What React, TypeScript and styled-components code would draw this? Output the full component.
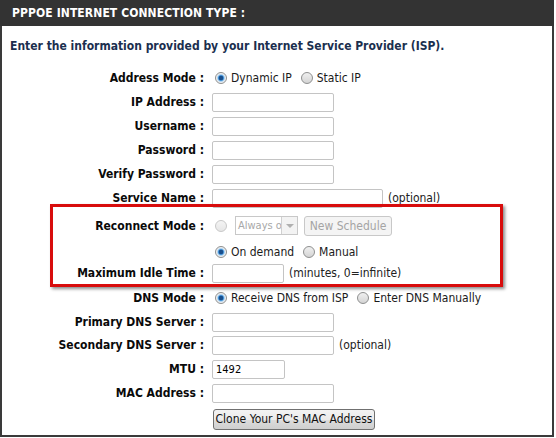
import React from "react";
import styled, { createGlobalStyle } from "styled-components";

const Global = createGlobalStyle`
  html, body { margin: 0; padding: 0; background: #fff; }
  body { font-family: "DejaVu Sans Condensed", "DejaVu Sans", sans-serif; }
`;

const Frame = styled.div`
  position: relative;
  box-sizing: border-box;
  width: 554px;
  height: 437px;
  border: 2px solid #3a3a3a;
  border-top: none;
  background: #fff;
`;

const Header = styled.div`
  height: 26px;
  margin: 0 -2px;
  background: #333333;
  color: #fff;
  font-weight: bold;
  font-size: 12px;
  display: flex;
  align-items: center;
  padding-left: 12px;
  letter-spacing: 0.1px;
`;

const Intro = styled.div`
  height: 40px;
  display: flex;
  align-items: center;
  padding-left: 8px;
  color: #1b2f4f;
  font-weight: bold;
  font-size: 12px;
`;

const Row = styled.div<{ $h: number }>`
  display: grid;
  grid-template-columns: 202px 1fr;
  column-gap: 8px;
  height: ${(p) => p.$h}px;
  align-items: center;
  font-size: 12px;
  color: #000;
`;

const Label = styled.div`
  text-align: right;
  font-weight: bold;
  white-space: nowrap;
  color: #0a0a0a;
`;

const Field = styled.div`
  display: flex;
  align-items: center;
  gap: 4px;
  white-space: nowrap;
  color: #1a1a1a;
`;

const TextBox = styled.div<{ $w: number }>`
  box-sizing: border-box;
  width: ${(p) => p.$w}px;
  height: 19px;
  border: 1px solid #c4c4c4;
  border-radius: 2px;
  background: #fff;
  font-size: 11px;
  display: flex;
  align-items: center;
  padding-left: 3px;
  color: #000;
`;

const RadioDot = styled.span<{ $on?: boolean; $dim?: boolean }>`
  box-sizing: border-box;
  display: inline-block;
  flex: none;
  width: 12px;
  height: 12px;
  border-radius: 50%;
  border: 1px solid ${(p) => (p.$dim ? "#c8c8c8" : "#8e8f8f")};
  background: ${(p) =>
    p.$on
      ? "radial-gradient(circle, #1a4f8c 0 2px, #3d8fd6 2.5px, #bcd9f0 3.6px, #f2f2f2 4.6px)"
      : p.$dim
      ? "linear-gradient(#f4f4f4, #e6e6e6)"
      : "linear-gradient(#f0f0f0, #d4d4d4)"};
  margin: 0 4px 0 3px;
`;

const Choice = styled.span`
  display: inline-flex;
  align-items: center;
  margin-right: 2px;
`;

const Select = styled.div`
  box-sizing: border-box;
  display: flex;
  width: 63px;
  height: 19px;
  border: 1px solid #c8c8c8;
  color: #a8a8a8;
  font-size: 11px;
  align-items: center;
  padding-left: 2px;
  overflow: hidden;
`;

const SelText = styled.span`
  flex: 1;
  min-width: 0;
`;

const Arrow = styled.span`
  box-sizing: border-box;
  flex: none;
  width: 16px;
  height: 17px;
  border-left: 1px solid #d0d0d0;
  background: #f3f3f3;
  display: flex;
  align-items: center;
  justify-content: center;
  &::after {
    content: "";
    border-left: 4px solid transparent;
    border-right: 4px solid transparent;
    border-top: 4px solid #b0b0b0;
  }
`;

const GhostButton = styled.div`
  box-sizing: border-box;
  width: 88px;
  height: 20px;
  border: 1px solid #c8c8c8;
  border-radius: 3px;
  color: #a4a4a4;
  background: #f4f4f4;
  font-size: 12px;
  display: flex;
  align-items: center;
  justify-content: center;
  margin-left: 2px;
`;

const CloneButton = styled.div`
  box-sizing: border-box;
  width: 162px;
  height: 21px;
  border: 1px solid #707070;
  border-radius: 3px;
  background: linear-gradient(#f3f3f3 0%, #ebebeb 50%, #dddddd 51%, #cfcfcf 100%);
  font-size: 12px;
  color: #111;
  display: flex;
  align-items: center;
  justify-content: center;
  margin-left: 1px;
`;

const Note = styled.span`
  color: #222;
  margin-left: 1px;
`;

const Highlight = styled.div`
  position: absolute;
  left: 48px;
  top: 204px;
  width: 453px;
  height: 83px;
  box-sizing: border-box;
  border: 3px solid #d80c0c;
  box-shadow: 2px 2px 3px rgba(0, 0, 0, 0.45);
  pointer-events: none;
`;

export default function App() {
  return (
    <>
      <Global />
      <Frame>
        <Header>PPPOE INTERNET CONNECTION TYPE :</Header>
        <Intro>Enter the information provided by your Internet Service Provider (ISP).</Intro>
        <Row $h={24}>
          <Label>Address Mode :</Label>
          <Field>
            <Choice><RadioDot $on />Dynamic IP</Choice>
            <Choice><RadioDot />Static IP</Choice>
          </Field>
        </Row>
        <Row $h={24}>
          <Label>IP Address :</Label>
          <Field><TextBox $w={122} /></Field>
        </Row>
        <Row $h={24}>
          <Label>Username :</Label>
          <Field><TextBox $w={122} /></Field>
        </Row>
        <Row $h={24}>
          <Label>Password :</Label>
          <Field><TextBox $w={122} /></Field>
        </Row>
        <Row $h={24}>
          <Label>Verify Password :</Label>
          <Field><TextBox $w={122} /></Field>
        </Row>
        <Row $h={24}>
          <Label>Service Name :</Label>
          <Field><TextBox $w={171} /><Note>(optional)</Note></Field>
        </Row>
        <Row $h={31}>
          <Label>Reconnect Mode :</Label>
          <Field>
            <RadioDot $dim />
            <Select><SelText>Always o</SelText><Arrow /></Select>
            <GhostButton>New Schedule</GhostButton>
          </Field>
        </Row>
        <Row $h={21}>
          <Label />
          <Field>
            <Choice><RadioDot $on />On demand</Choice>
            <Choice><RadioDot />Manual</Choice>
          </Field>
        </Row>
        <Row $h={22}>
          <Label>Maximum Idle Time :</Label>
          <Field><TextBox $w={72} /><Note>(minutes, 0=infinite)</Note></Field>
        </Row>
        <Row $h={27}>
          <Label>DNS Mode :</Label>
          <Field>
            <Choice><RadioDot $on />Receive DNS from ISP</Choice>
            <Choice><RadioDot />Enter DNS Manually</Choice>
          </Field>
        </Row>
        <Row $h={22}>
          <Label>Primary DNS Server :</Label>
          <Field><TextBox $w={122} /></Field>
        </Row>
        <Row $h={24}>
          <Label>Secondary DNS Server :</Label>
          <Field><TextBox $w={122} /><Note>(optional)</Note></Field>
        </Row>
        <Row $h={24}>
          <Label>MTU :</Label>
          <Field><TextBox $w={73}>1492</TextBox></Field>
        </Row>
        <Row $h={24}>
          <Label>MAC Address :</Label>
          <Field><TextBox $w={122} /></Field>
        </Row>
        <Row $h={28}>
          <Label />
          <Field><CloneButton>Clone Your PC's MAC Address</CloneButton></Field>
        </Row>
        <Highlight />
      </Frame>
    </>
  );
}
